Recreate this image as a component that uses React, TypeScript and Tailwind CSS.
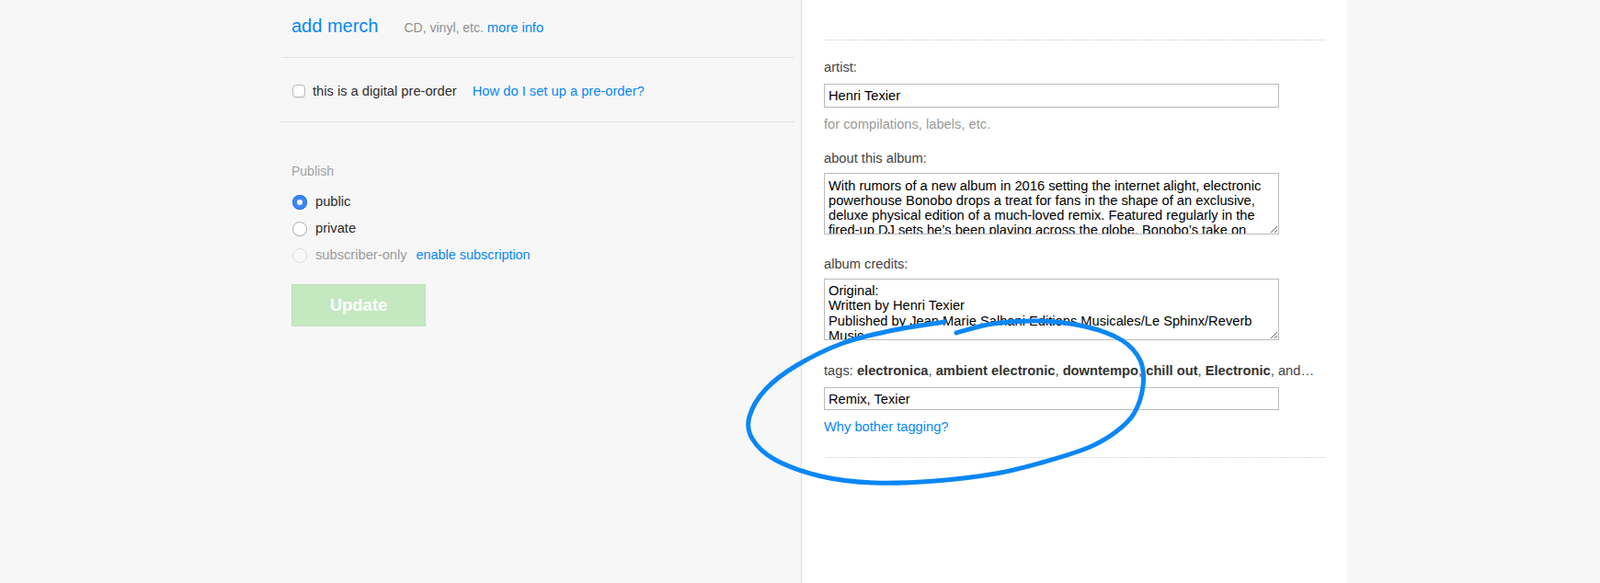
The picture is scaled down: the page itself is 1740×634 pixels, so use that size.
import React from "react";

const pts: [number, number][] = [
  [1027, 350], [967, 360], [917, 373], [867, 397], [833, 423], [815, 453], [818, 477],
  [843, 500], [893, 518], [950, 525], [1017, 523], [1083, 515], [1133, 503], [1183, 487],
  [1213, 470], [1233, 450], [1243, 420], [1240, 392], [1220, 370], [1180, 355],
  [1130, 349], [1080, 352], [1040, 362],
];

function smoothPath(p: [number, number][]) {
  let d = `M${p[0][0]},${p[0][1]}`;
  for (let i = 0; i < p.length - 1; i++) {
    const p0 = p[i - 1] || p[i];
    const p1 = p[i];
    const p2 = p[i + 1];
    const p3 = p[i + 2] || p2;
    const c1x = p1[0] + (p2[0] - p0[0]) / 6;
    const c1y = p1[1] + (p2[1] - p0[1]) / 6;
    const c2x = p2[0] - (p3[0] - p1[0]) / 6;
    const c2y = p2[1] - (p3[1] - p1[1]) / 6;
    d += ` C${c1x.toFixed(1)},${c1y.toFixed(1)} ${c2x.toFixed(1)},${c2y.toFixed(1)} ${p2[0]},${p2[1]}`;
  }
  return d;
}

const about =
  "With rumors of a new album in 2016 setting the internet alight, electronic\npowerhouse Bonobo drops a treat for fans in the shape of an exclusive,\ndeluxe physical edition of a much-loved remix. Featured regularly in the\nfired-up DJ sets he\u2019s been playing across the globe, Bonobo\u2019s take on\nHenri Texier\u2019s track is a must-have.";

const credits =
  "Original:\nWritten by Henri Texier\nPublished by Jean Marie Salhani Editions Musicales/Le Sphinx/Reverb\nMusic\n";

function Radio({ state }: { state: "on" | "off" | "disabled" }) {
  if (state === "on") {
    return (
      <span className="flex h-[16px] w-[16px] items-center justify-center rounded-full bg-[#3a86f6] shadow-[inset_0_0_0_1px_#2f78e6]">
        <span className="h-[6px] w-[6px] rounded-full bg-white" />
      </span>
    );
  }
  if (state === "off") {
    return (
      <span className="block h-[16px] w-[16px] rounded-full border border-[#b3b3b3] bg-white shadow-[0_0.5px_1px_rgba(0,0,0,0.1)]" />
    );
  }
  return <span className="block h-[16px] w-[16px] rounded-full border border-[#dedede] bg-[#f9f9f9]" />;
}

export default function App() {
  return (
    <div className="relative h-[634px] w-full overflow-hidden bg-[#f7f7f7] font-['Liberation_Sans',Arial,sans-serif] text-[14.7px] text-[#333]">
      <div className="flex h-full pl-[306px]">
        {/* left column */}
        <div className="w-[558px] shrink-0">
          <div className="flex h-[63px] items-baseline border-b border-[#e3e3e3] pl-[11px] pt-[16px]">
            <span className="text-[20px] leading-[24px] text-[#0687f5]">add merch</span>
            <span className="ml-[28px] text-[14px] text-[#8f8f8f]">CD, vinyl, etc.</span>
            <span className="ml-[4px] text-[14.7px] text-[#0687f5]">more info</span>
          </div>
          <div className="flex h-[70px] items-center border-b border-[#e3e3e3] pl-[12px] pt-[3px]">
            <span className="block h-[14px] w-[14px] rounded-[4px] border border-[#b9b9b9] bg-white shadow-[0_0.5px_1px_rgba(0,0,0,0.08)]" />
            <span className="ml-[8px] leading-[18px] text-[#2e2e2e]">this is a digital pre-order</span>
            <span className="ml-[17px] leading-[18px] text-[#0687f5]">How do I set up a pre-order?</span>
          </div>
          <div className="pl-[11px] pt-[45px]">
            <div className="text-[14px] leading-[17px] text-[#a3a3a3]">Publish</div>
            <div className="mt-[10px]">
              <div className="flex h-[29px] items-center pl-[1px]">
                <Radio state="on" />
                <span className="ml-[9px] text-[#2a2a2a]">public</span>
              </div>
              <div className="flex h-[29px] items-center pl-[1px]">
                <Radio state="off" />
                <span className="ml-[9px] text-[#2a2a2a]">private</span>
              </div>
              <div className="flex h-[29px] items-center pl-[1px]">
                <Radio state="disabled" />
                <span className="ml-[9px] text-[#9a9a9a]">subscriber-only</span>
                <span className="ml-[10px] text-[14.4px] text-[#0687f5]">enable subscription</span>
              </div>
            </div>
            <div className="mt-[17px] flex h-[46px] w-[146px] items-center justify-center border border-[#bfe2bb] bg-[#c4e8c0] text-[18.5px] font-bold text-white">
              Update
            </div>
          </div>
        </div>

        {/* right panel */}
        <div className="ml-[7px] h-full w-[594px] shrink-0 border-l border-[#e0e0e0] bg-white pl-[24px] pr-[24px] shadow-[-1px_0_2px_rgba(0,0,0,0.03)]">
          <div className="ml-[2px] mt-[43px] border-t border-dotted border-[#cacaca]" />
          <div className="mt-[20px] leading-[18px] text-[#444]">artist:</div>
          <input
            readOnly
            value="Henri Texier"
            className="mt-[9px] block h-[26px] w-[495px] border border-[#bababa] bg-white px-[4px] text-[14.7px] text-black outline-none"
          />
          <div className="mt-[9px] leading-[18px] text-[#9a9a9a]">for compilations, labels, etc.</div>
          <div className="mt-[19px] leading-[18px] text-[#444]">about this album:</div>
          <textarea
            readOnly
            value={about}
            className="mt-[7px] block h-[67px] w-[495px] overflow-hidden border border-[#bababa] bg-white px-[4px] pt-[5px] text-[14.7px] leading-[16px] text-black outline-none"
          />
          <div className="mt-[23px] leading-[18px] text-[#444]">album credits:</div>
          <textarea
            readOnly
            value={credits}
            className="mt-[7px] block h-[67px] w-[495px] overflow-hidden border border-[#bababa] bg-white px-[4px] pt-[4px] text-[14.7px] leading-[16.3px] text-black outline-none"
          />
          <div className="mt-[24px] whitespace-nowrap leading-[18px] text-[#444]">
            tags: <b className="font-bold text-[#333]">electronica</b>, <b className="font-bold text-[#333]">ambient electronic</b>,{" "}
            <b className="font-bold text-[#333]">downtempo</b>, <b className="font-bold text-[#333]">chill out</b>,{" "}
            <b className="font-bold text-[#333]">Electronic</b>, and…
          </div>
          <input
            readOnly
            value="Remix, Texier"
            className="mt-[9px] block h-[25px] w-[495px] border border-[#bababa] bg-white px-[4px] text-[14.7px] text-black outline-none"
          />
          <div className="mt-[9px] leading-[18px] text-[#0687f5]">Why bother tagging?</div>
          <div className="ml-[2px] mt-[24px] border-t border-dotted border-[#cacaca]" />
        </div>
      </div>

      <svg
        className="pointer-events-none absolute left-0 top-0"
        width={1740}
        height={634}
        viewBox="0 0 1740 634"
      >
        <path d={smoothPath(pts)} fill="none" stroke="#0a87f5" strokeWidth={5} strokeLinecap="round" strokeLinejoin="round" />
      </svg>
    </div>
  );
}
